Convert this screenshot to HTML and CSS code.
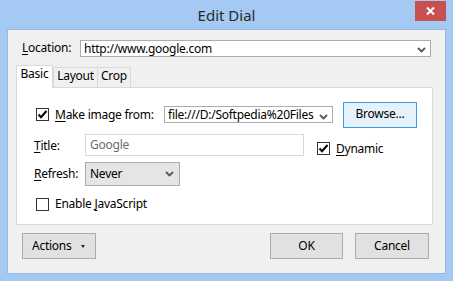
FILE: index.html
```html
<!DOCTYPE html>
<html>
<head>
<meta charset="utf-8">
<link rel="stylesheet" href="styles.css">
</head>
<body>
<div class="window">
  <div class="titlebar">
    <span class="title">Edit Dial</span>
    <div class="close"><svg width="9" height="8" viewBox="0 0 9 8"><path d="M1 0.5 L8 7.5 M8 0.5 L1 7.5" stroke="#fff" stroke-width="2"/></svg></div>
  </div>
  <div class="client">
    <div class="loc-row">
      <span class="lbl loc-lbl"><u>L</u>ocation:</span>
      <div class="combo loc-combo"><span class="ctext">http://www.google.com</span><svg class="chev" width="9" height="6" viewBox="0 0 9 6"><path d="M1 1 L4.5 4.5 L8 1" fill="none" stroke="#555" stroke-width="1.8"/></svg></div>
    </div>
    <div class="tabs">
      <div class="tab active tab-basic">Basic</div>
      <div class="tab tab-layout">Layout</div>
      <div class="tab tab-crop">Crop</div>
    </div>
    <div class="panel">
      <div class="row row1">
        <div class="chk-wrap make">
          <span class="chk"><svg width="11" height="11" viewBox="0 0 11 11"><path d="M1.5 5.5 L4 8.2 L9.5 2" fill="none" stroke="#000" stroke-width="2"/></svg></span>
          <span class="chk-text"><u>M</u>ake image from:</span>
        </div>
        <div class="combo file-combo"><span class="ctext">file:///D:/Softpedia%20Files</span><svg class="chev" width="9" height="6" viewBox="0 0 9 6"><path d="M1 1 L4.5 4.5 L8 1" fill="none" stroke="#555" stroke-width="1.8"/></svg></div>
        <div class="btn browse">Browse...</div>
      </div>
      <div class="row row2">
        <span class="lbl field-lbl"><u>T</u>itle:</span>
        <div class="field title-field">Google</div>
        <div class="chk-wrap dyn">
          <span class="chk"><svg width="11" height="11" viewBox="0 0 11 11"><path d="M1.5 5.5 L4 8.2 L9.5 2" fill="none" stroke="#000" stroke-width="2"/></svg></span>
          <span class="chk-text"><u>D</u>ynamic</span>
        </div>
      </div>
      <div class="row row3">
        <span class="lbl field-lbl"><u>R</u>efresh:</span>
        <div class="select"><span class="ctext">Never</span><svg class="chev" width="9" height="6" viewBox="0 0 9 6"><path d="M1 1 L4.5 4.5 L8 1" fill="none" stroke="#555" stroke-width="1.8"/></svg></div>
      </div>
      <div class="row row4">
        <div class="chk-wrap js">
          <span class="chk"></span>
          <span class="chk-text">Enable <u>J</u>avaScript</span>
        </div>
      </div>
    </div>
    <div class="footer">
      <div class="btn actions">Actions<span class="tri"></span></div>
      <div class="spacer"></div>
      <div class="btn ok">OK</div>
      <div class="btn cancel">Cancel</div>
    </div>
  </div>
</div>
</body>
</html>
```
FILE: styles.css
```css
html, body {
  margin: 0;
  padding: 0;
}
body {
  width: 453px;
  height: 281px;
  overflow: hidden;
  background: #a4caf4;
  font-family: "Segoe UI", "Noto Sans", sans-serif;
  font-size: 12px;
  letter-spacing: -0.25px;
  color: #000;
}
u { text-decoration: underline; text-underline-offset: 2px; }
.window {
  width: 453px;
  height: 281px;
  display: flex;
  flex-direction: column;
}
.titlebar {
  height: 30px;
  position: relative;
  display: flex;
  align-items: center;
  justify-content: center;
}
.title {
  font-size: 15px;
  letter-spacing: 0;
  color: #2b2b2b;
  line-height: 20px;
  margin-top: 1px;
}
.close {
  position: absolute;
  top: 1px;
  left: 415px;
  width: 31px;
  height: 20px;
  background: #c75050;
  display: flex;
  align-items: center;
  justify-content: center;
}
.client {
  margin: 0 7px 7px 7px;
  border: 1px solid #93bbe6;
  background: #f0f0f0;
  height: 242px;
  padding: 10px 12px 0 8px;
  box-sizing: content-box;
  display: flex;
  flex-direction: column;
}
.lbl { line-height: 16px; white-space: nowrap; }
.loc-row {
  display: flex;
  align-items: center;
  margin-left: 6px;
  height: 17px;
}
.loc-lbl { width: 58px; flex: none; }
.combo {
  box-sizing: border-box;
  display: flex;
  align-items: center;
  background: #fff;
  border: 1px solid #abadb3;
  height: 17px;
  position: relative;
  overflow: hidden;
}
.ctext { line-height: 15px; white-space: nowrap; flex: 1; overflow: hidden; }
.chev { flex: none; margin-top: 4px; }
.loc-combo { width: 351px; padding-left: 3px; padding-right: 4px; }
.tabs {
  display: flex;
  align-items: flex-end;
  height: 23px;
  margin-top: 8px;
  margin-bottom: -1px;
  position: relative;
  z-index: 1;
}
.tab {
  box-sizing: border-box;
  border: 1px solid #d9d9d9;
  border-bottom: none;
  background: #f0f0f0;
  height: 20px;
  margin-bottom: 1px;
  line-height: 16px;
  text-align: center;
}
.tab.active {
  background: #fff;
  height: 23px;
  margin-bottom: 0;
}
.tab-basic { width: 37px; }
.tab-layout { width: 45px; margin-left: 0; }
.tab-crop { width: 34px; margin-left: -1px; }
.panel {
  box-sizing: border-box;
  height: 138px;
  border: 1px solid #d9d9d9;
  background: #fff;
  padding: 14px 0 0 17px;
  display: flex;
  flex-direction: column;
}
.row { display: flex; }
.row1 { height: 26px; align-items: center; }
.chk-wrap { display: flex; align-items: center; }
.chk {
  box-sizing: border-box;
  width: 13px;
  height: 13px;
  border: 1px solid #333;
  background: #fff;
  margin-left: 2px;
  flex: none;
  display: flex;
  align-items: center;
  justify-content: center;
}
.chk-text { margin-left: 6px; line-height: 16px; white-space: nowrap; }
.make { width: 130px; flex: none; }
.file-combo { width: 169px; padding-left: 3px; padding-right: 4px; }
.file-combo .ctext { margin-right: 2px; }
.btn {
  box-sizing: border-box;
  height: 26px;
  border: 1px solid #adadad;
  background: #e1e1e1;
  display: flex;
  align-items: center;
  justify-content: center;
  line-height: 16px;
  flex: none;
}
.browse {
  width: 74px;
  margin-left: 10px;
  border-color: #3c9be3;
  background: #e5f1fb;
  padding-bottom: 1px;
}
.row2 { margin-top: 6px; align-items: flex-start; }
.field-lbl { width: 51px; flex: none; margin-top: 3px; }
.row2 .field-lbl { margin-top: 4px; }
.field {
  box-sizing: border-box;
  width: 219px;
  height: 22px;
  border: 1px solid #d9d9d9;
  background: #fff;
  color: #6d6d6d;
  padding-left: 4px;
  line-height: 19px;
}
.dyn { margin-left: 13px; margin-top: 7px; }
.dyn .chk { margin-left: 0; }
.row3 { margin-top: 5px; align-items: center; height: 24px; }
.row3 .field-lbl { margin-top: 0; }
.select {
  box-sizing: border-box;
  width: 95px;
  height: 24px;
  border: 1px solid #acacac;
  background: #e5e5e5;
  display: flex;
  align-items: center;
  padding-left: 4px;
  padding-right: 5px;
}
.select .chev { margin-top: 0; }
.row4 { margin-top: 12px; height: 13px; align-items: center; }
.footer {
  display: flex;
  margin-top: 8px;
  height: 26px;
  padding-left: 6px;
  padding-right: 4px;
}
.spacer { flex: 1; }
.actions { width: 74px; justify-content: flex-start; padding-left: 9px; }
.tri {
  width: 0;
  height: 0;
  border-left: 2.5px solid transparent;
  border-right: 2.5px solid transparent;
  border-top: 3px solid #222;
  margin-left: 9px;
  margin-top: 1px;
}
.ok { width: 73px; }
.cancel { width: 74px; margin-left: 12px; }
```
